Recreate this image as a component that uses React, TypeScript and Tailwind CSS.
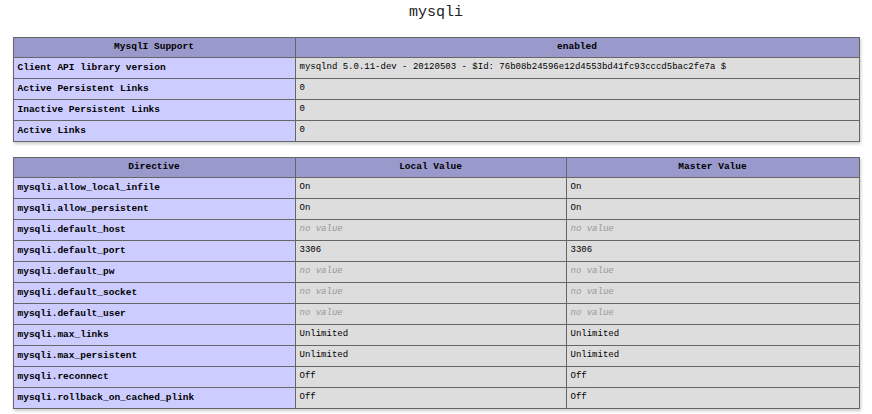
const support: [string, string][] = [
  ['Client API library version', 'mysqlnd 5.0.11-dev - 20120503 - $Id: 76b08b24596e12d4553bd41fc93cccd5bac2fe7a $'],
  ['Active Persistent Links', '0'],
  ['Inactive Persistent Links', '0'],
  ['Active Links', '0'],
]

// null = "no value"
const directives: [string, string | null][] = [
  ['mysqli.allow_local_infile', 'On'],
  ['mysqli.allow_persistent', 'On'],
  ['mysqli.default_host', null],
  ['mysqli.default_port', '3306'],
  ['mysqli.default_pw', null],
  ['mysqli.default_socket', null],
  ['mysqli.default_user', null],
  ['mysqli.max_links', 'Unlimited'],
  ['mysqli.max_persistent', 'Unlimited'],
  ['mysqli.reconnect', 'Off'],
  ['mysqli.rollback_on_cached_plink', 'Off'],
]

const th = 'h-[20px] border border-[#666] bg-[#9999cc] text-center font-bold text-[9.5px] text-black p-0'
const e = 'h-[21px] border border-[#666] bg-[#ccccff] pl-[4px] font-bold text-[9.5px] text-black text-left p-0'
const v = 'h-[21px] border border-[#666] bg-[#dddddd] pl-[4px] text-[9px] text-black text-left p-0'

function Value({ value }: { value: string | null }) {
  if (value === null) return <i className="text-[#999]">no value</i>
  return <>{value}</>
}

export default function App() {
  return (
    <div className="min-h-[414px] bg-white font-['Liberation_Mono',monospace] pt-[2px]">
      <h2 className="h-[22px] text-center text-[15px] leading-[22px] text-[#222]">mysqli</h2>

      <table className="mx-auto mt-[13px] w-[847px] border-collapse shadow-[1px_2px_3px_#ccc]">
        <thead>
          <tr>
            <th className={`${th} w-[282px]`}>MysqlI Support</th>
            <th className={th}>enabled</th>
          </tr>
        </thead>
        <tbody>
          {support.map(([k, val]) => (
            <tr key={k}>
              <td className={e}>{k}</td>
              <td className={v}>{val}</td>
            </tr>
          ))}
        </tbody>
      </table>

      <table className="mx-auto mt-[15px] w-[847px] border-collapse shadow-[1px_2px_3px_#ccc]">
        <thead>
          <tr>
            <th className={`${th} w-[282px]`}>Directive</th>
            <th className={`${th} w-[271px]`}>Local Value</th>
            <th className={th}>Master Value</th>
          </tr>
        </thead>
        <tbody>
          {directives.map(([k, val]) => (
            <tr key={k}>
              <td className={e}>{k}</td>
              <td className={v}><Value value={val} /></td>
              <td className={v}><Value value={val} /></td>
            </tr>
          ))}
        </tbody>
      </table>
    </div>
  )
}
